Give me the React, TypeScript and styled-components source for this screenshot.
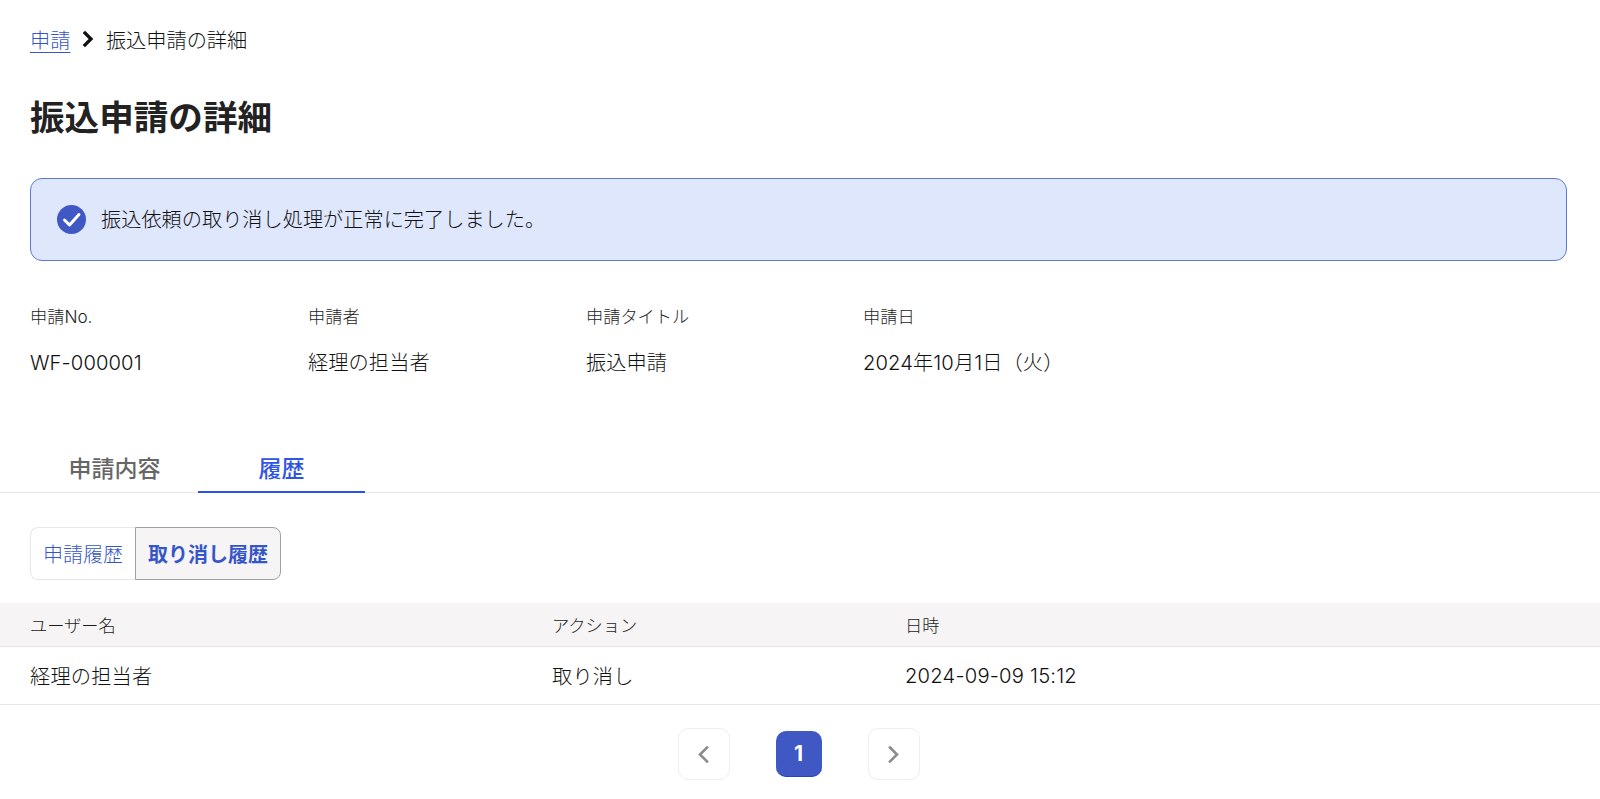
import React from "react";
import styled, { createGlobalStyle } from "styled-components";

const Global = createGlobalStyle`
  html, body { margin: 0; padding: 0; background: #fff; }
  body { font-family: Inter, "Noto Sans CJK JP", sans-serif; color: #111; overflow: hidden; }
  * { box-sizing: border-box; }
`;
const Page = styled.div`width: 1600px; height: 799px; overflow: hidden; padding-top: 25px;`;
const Breadcrumb = styled.nav`display: flex; align-items: center; height: 28px; margin: 0 30px; font-size: 20.2px; font-weight: 300; color: #111;`;
const CrumbLink = styled.a`color: #3556c8; text-decoration: underline; text-underline-offset: 4px; text-decoration-thickness: 1px;`;
const CrumbSep = styled.span`display: flex; width: 35.5px; justify-content: center; color: #111;`;
const Title = styled.h1`margin: 40px 30px 0; height: 48px; line-height: 48px; font-size: 34.6px; font-weight: 700; color: #222;`;
const Alert = styled.div`display: flex; align-items: center; gap: 15px; margin: 37px 33px 0 30px; height: 83px; padding: 0 26px;
  background: #dfe7fd; border: 1px solid #5e78d4; border-radius: 12px; font-size: 20.2px; font-weight: 300; color: #111;`;
const AlertText = styled.span`position: relative; top: -1px;`;
const Meta = styled.dl`display: grid; grid-template-columns: 278px 278px 277px 278px; margin: 44px 30px 0;`;
const MetaItem = styled.div`display: flex; flex-direction: column; gap: 22px;`;
const MetaLabel = styled.dt`font-size: 17.2px; line-height: 24px; font-weight: 300; color: #1c1c1c;`;
const MetaValue = styled.dd`margin: 0; font-size: 20.2px; line-height: 24px; font-weight: 300; letter-spacing: 0.1px; color: #111;`;
const Tabs = styled.div`display: flex; margin-top: 71px; padding-left: 31px; border-bottom: 1px solid #e8e8e8;`;
const Tab = styled.div<{ $active?: boolean }>`width: 167px; height: 47px; padding-top: 7px; margin-bottom: -1px; text-align: center; font-size: 23px; line-height: 32px; font-weight: 500;
  color: ${p => (p.$active ? "#2f55e0" : "#666")}; border-bottom: 2px solid ${p => (p.$active ? "#2b52e8" : "transparent")};`;
const Segments = styled.div`display: inline-flex; margin: 34px 30px 0; height: 53px; vertical-align: top;`;
const Segment = styled.div<{ $active?: boolean }>`display: flex; align-items: center; padding: 0 12px; font-size: 20px; color: #3556c8;
  font-weight: ${p => (p.$active ? 700 : 300)}; background: ${p => (p.$active ? "#f6f4f5" : "#fff")};
  border: 1px solid ${p => (p.$active ? "#a0a0a0" : "#e8e8e8")}; ${p => (p.$active ? "border-radius: 0 8px 8px 0;" : "border-right: 0; border-radius: 8px 0 0 8px;")}`;
const Table = styled.div`margin-top: 23px; display: grid; grid-template-columns: 522px 353px 1fr;`;
const HeadCell = styled.div`height: 44px; padding-left: 30px; display: flex; align-items: center; font-size: 17.2px; font-weight: 300; color: #1c1c1c; background: #f6f4f5; border-bottom: 1px solid #e6e6e6;`;
const Cell = styled.div`height: 58px; padding-left: 30px; display: flex; align-items: center; font-size: 20.2px; font-weight: 300; letter-spacing: 0.2px; color: #111; border-bottom: 1px solid #e6e6e6;`;
const Pager = styled.div`display: flex; align-items: center; justify-content: center; gap: 46px; margin-top: 23px; padding-right: 3px;`;
const PageArrow = styled.div`width: 52px; height: 52px; display: flex; align-items: center; justify-content: center; border: 1px solid #eee; border-radius: 10px; color: #8c8c8c;`;
const PageNum = styled.div`width: 46px; height: 46px; display: flex; align-items: center; justify-content: center; border-radius: 10px; background: #3f58c4; color: #fff; font-size: 21px; font-weight: 700; border-bottom: 1px solid #2547b8;`;

const Chevron = ({ dir, size, width }: { dir: "l" | "r"; size: number; width: number }) => (
  <svg width={size} height={size} viewBox="0 0 24 24" fill="none" stroke="currentColor" strokeWidth={width} strokeLinecap="square" strokeLinejoin="miter">
    <path d={dir === "r" ? "M8 4l8 8-8 8" : "M16 4l-8 8 8 8"} />
  </svg>
);

const CheckCircle = () => (
  <svg width="29" height="29" viewBox="0 0 29 29" style={{ flex: "none" }}>
    <circle cx="14.5" cy="14.5" r="14.5" fill="#3f58c4" />
    <path d="M7.5 15l5 5 9.5-10.5" fill="none" stroke="#fff" strokeWidth="3" strokeLinecap="round" strokeLinejoin="round" />
  </svg>
);

export default function App() {
  return (
    <Page>
      <Global />
      <Breadcrumb>
        <CrumbLink>申請</CrumbLink>
        <CrumbSep><Chevron dir="r" size={18} width={4.4} /></CrumbSep>
        <span>振込申請の詳細</span>
      </Breadcrumb>
      <Title>振込申請の詳細</Title>
      <Alert><CheckCircle /><AlertText>振込依頼の取り消し処理が正常に完了しました。</AlertText></Alert>
      <Meta>
        <MetaItem><MetaLabel>申請No.</MetaLabel><MetaValue>WF-000001</MetaValue></MetaItem>
        <MetaItem><MetaLabel>申請者</MetaLabel><MetaValue>経理の担当者</MetaValue></MetaItem>
        <MetaItem><MetaLabel>申請タイトル</MetaLabel><MetaValue>振込申請</MetaValue></MetaItem>
        <MetaItem><MetaLabel>申請日</MetaLabel><MetaValue>2024年10月1日（火）</MetaValue></MetaItem>
      </Meta>
      <Tabs><Tab>申請内容</Tab><Tab $active>履歴</Tab></Tabs>
      <Segments><Segment>申請履歴</Segment><Segment $active>取り消し履歴</Segment></Segments>
      <Table>
        <HeadCell>ユーザー名</HeadCell><HeadCell>アクション</HeadCell><HeadCell>日時</HeadCell>
        <Cell>経理の担当者</Cell><Cell>取り消し</Cell><Cell>2024-09-09 15:12</Cell>
      </Table>
      <Pager>
        <PageArrow><Chevron dir="l" size={21} width={3} /></PageArrow>
        <PageNum>1</PageNum>
        <PageArrow><Chevron dir="r" size={21} width={3} /></PageArrow>
      </Pager>
    </Page>
  );
}
